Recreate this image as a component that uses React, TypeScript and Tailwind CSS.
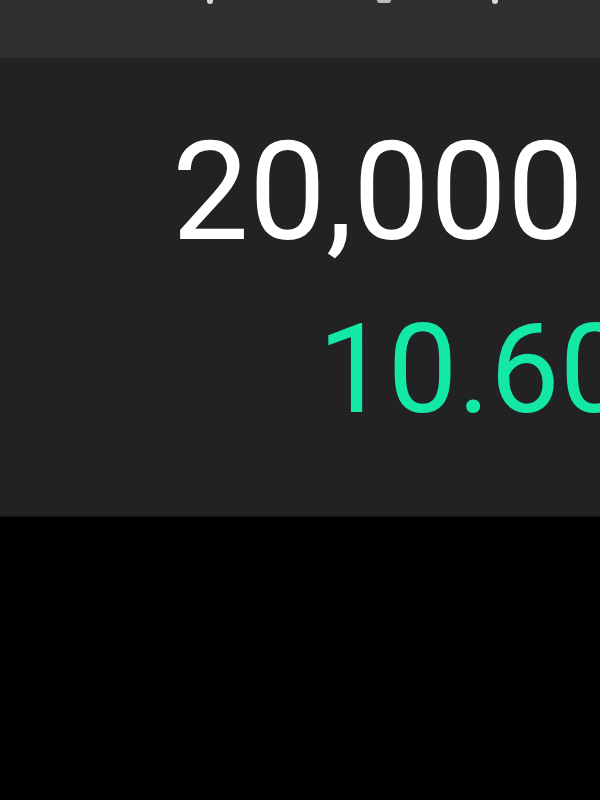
import React from "react";

const App: React.FC = () => {
  return (
    <div className="w-[600px] h-[800px] bg-black overflow-hidden" style={{ fontFamily: "Roboto, 'Noto Sans', sans-serif" }}>
      {/* top bar, labels cut off by the window edge */}
      <div className="h-[58px] bg-[#2f2f2f] flex items-start">
        <div className="ml-[207px] w-[6px] h-[4px] rounded-b-full bg-[#d8d8d8]" />
        <div className="ml-[164px] w-[14px] h-[3px] rounded-b-full bg-[#bdbdbd]" />
        <div className="ml-[101px] w-[6px] h-[4px] rounded-b-full bg-[#d8d8d8]" />
      </div>

      <div className="h-[459px] bg-[#222222] border-b-2 border-[#1a1a1a] flex flex-col overflow-hidden">
        <div className="mt-[66px] pl-[172px] text-[137px] leading-none text-white whitespace-nowrap">
          20,000
        </div>
        <div className="mt-[47px] pl-[318px] text-[124px] leading-none text-[#14e8a6] whitespace-nowrap">
          10.60%
        </div>
      </div>
    </div>
  );
};

export default App;
